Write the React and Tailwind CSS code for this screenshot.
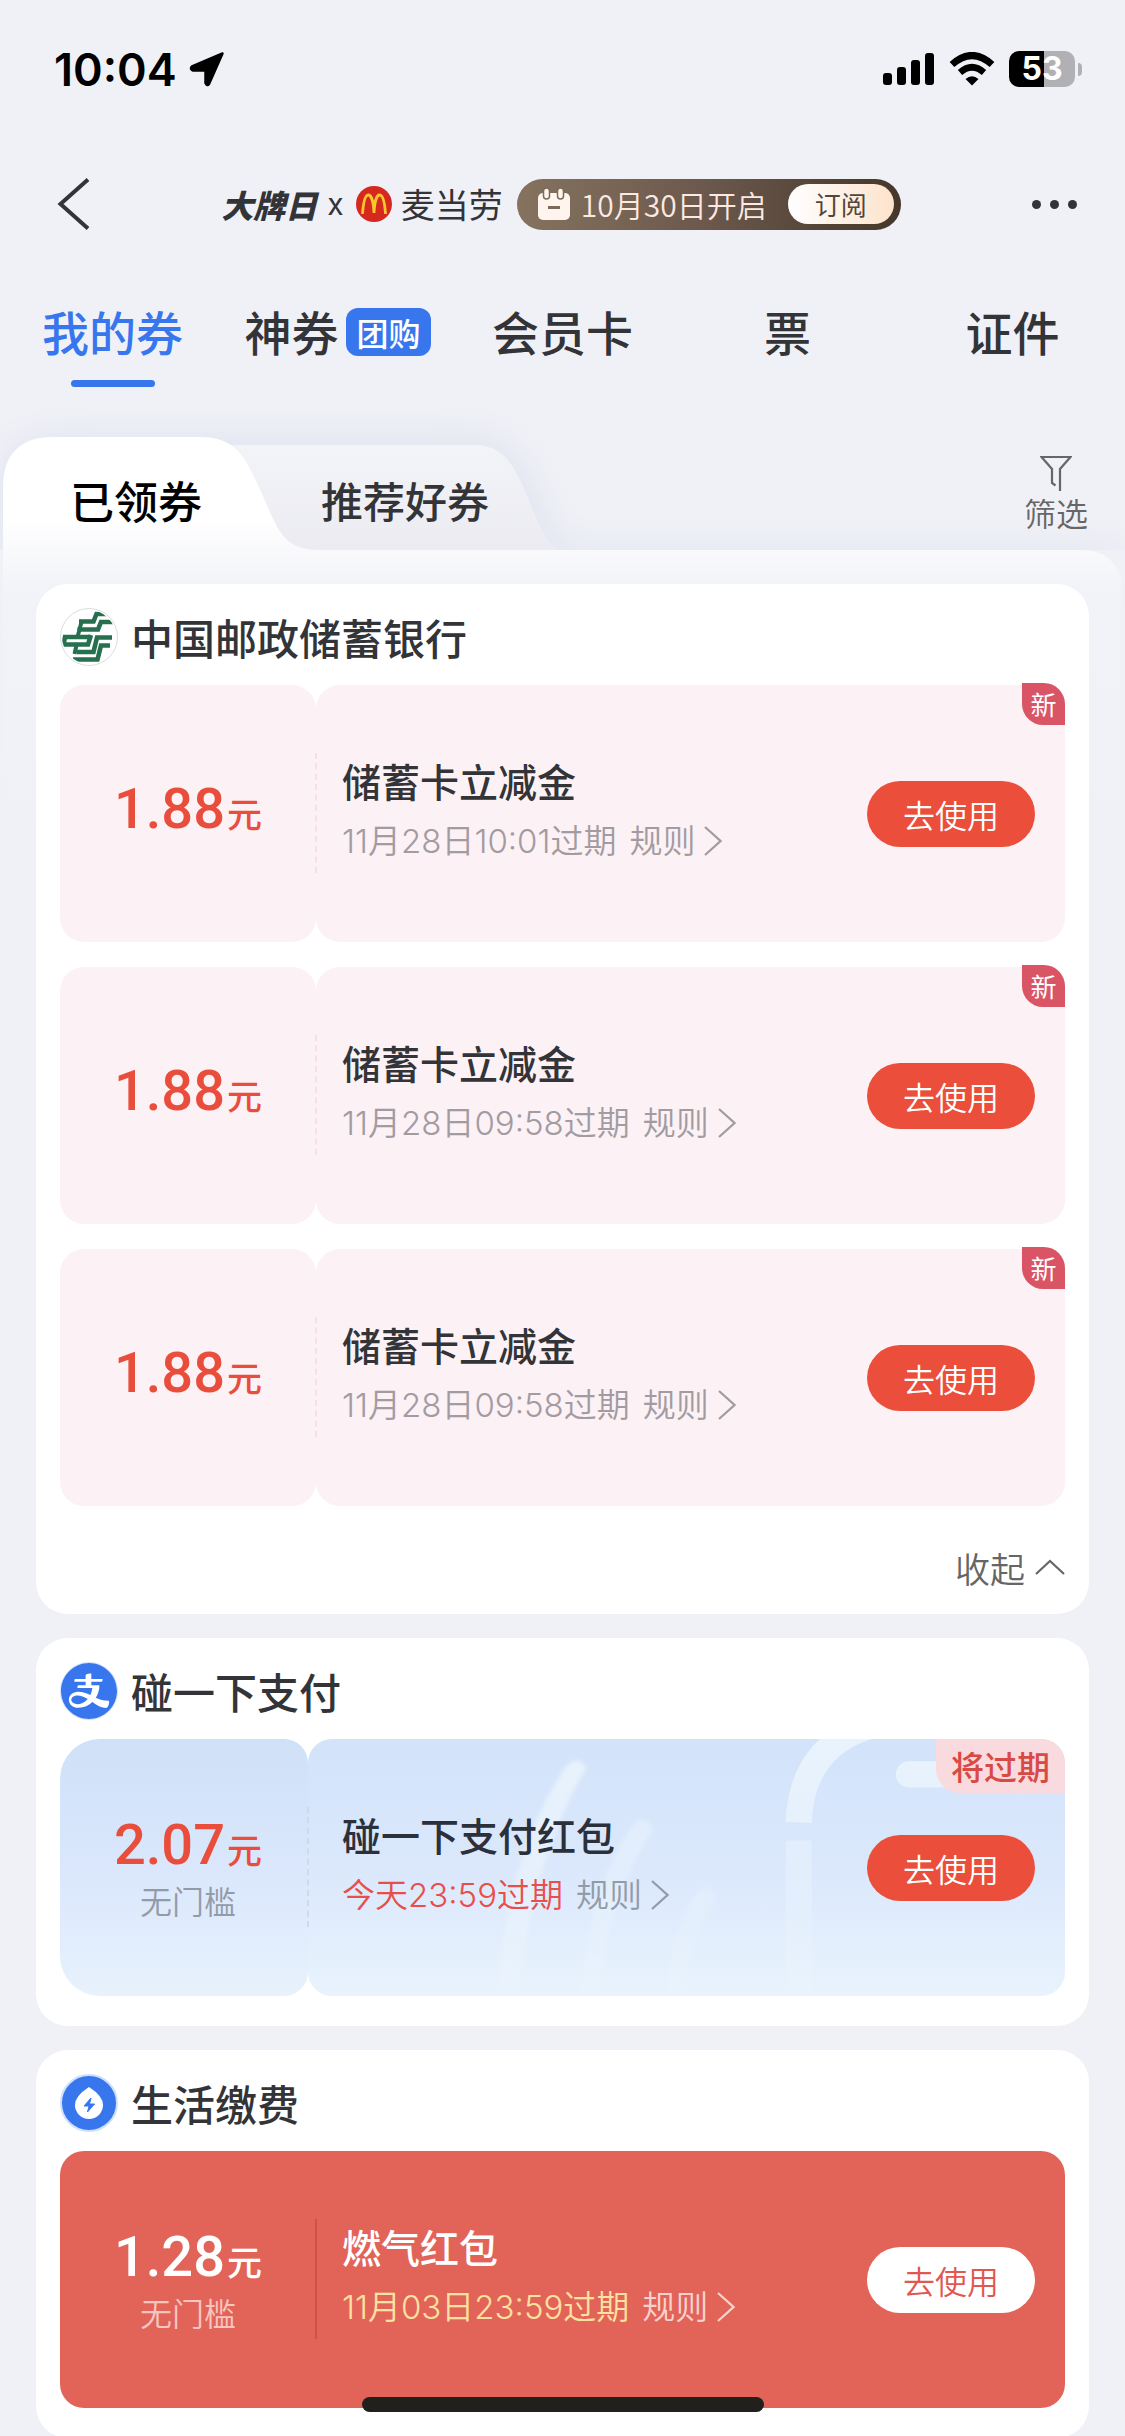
import { AiFillAlipayCircle } from "react-icons/ai";

const TABS = [
  { label: "我的券", active: true },
  { label: "神券", badge: "团购" },
  { label: "会员卡" },
  { label: "票" },
  { label: "证件" },
];

function StatusBar() {
  return (
    <div className="flex h-[138px] shrink-0 items-center justify-between pl-[54px] pr-[43px]">
      <div className="flex items-center gap-3">
        <span className="font-['Inter'] text-[45px] font-semibold leading-none text-black">10:04</span>
        <svg viewBox="0 0 36 36" className="size-9" aria-hidden="true">
          <path d="M33.5 2.5 20 33Q18 35.500 16.500 32V19.500H4Q.500 18 3 15.500Z" fill="#000" stroke="#000" strokeWidth="2.500" strokeLinejoin="round" />
        </svg>
      </div>
      <div className="flex items-center gap-[14px]">
        <svg viewBox="0 0 52 34" className="h-[34px] w-[52px]" aria-hidden="true">
          <rect x="0" y="21" width="9" height="12" rx="3" />
          <rect x="14" y="15" width="9" height="18" rx="3" />
          <rect x="28" y="8" width="9" height="25" rx="3" />
          <rect x="42" y="1" width="9" height="32" rx="3" />
        </svg>
        <svg viewBox="0 0 46 34" className="h-[34px] w-[46px]" aria-hidden="true">
          <path d="M3 12.500Q23-5.500 43 12.500" fill="none" stroke="#000" strokeWidth="7" />
          <path d="M11 20.500Q23 10 35 20.500" fill="none" stroke="#000" strokeWidth="6.500" />
          <path d="M16.500 27Q23 21.500 29.500 27L23 33.500Z" />
        </svg>
        <div className="flex items-center gap-[3px]">
          <div className="flex h-9 w-[66px] items-center justify-center rounded-[10px] bg-gradient-to-r from-black from-53% to-[#b1b1b5] to-53%">
            <span className="font-['Inter'] text-[32px] font-bold leading-none text-white">53</span>
          </div>
          <div className="h-[13px] w-1 rounded-r-full bg-[#b1b1b5]" />
        </div>
      </div>
    </div>
  );
}

function NavBar() {
  return (
    <header className="flex h-[132px] shrink-0 items-center justify-between pl-[56px] pr-[48px]">
      <button type="button" aria-label="返回">
        <svg viewBox="0 0 34 52" className="h-[52px] w-[34px]" fill="none" stroke="#333438" strokeWidth="4" aria-hidden="true">
          <path d="M32 1.500 4.500 26 32 50.500" />
        </svg>
      </button>
      <div className="flex items-center text-[34px] leading-none text-[#333438]">
        <span className="text-[32px] font-black italic">大牌日</span>
        <span className="ml-[10px] font-['Inter'] text-[30px]">x</span>
        <svg viewBox="0 0 36 36" className="ml-3 size-9" aria-hidden="true">
          <circle cx="18" cy="18" r="18" fill="#d5281e" />
          <path d="M6.500 28C7.500 13 10 9 12.500 9S17.500 15 18 27C18.500 15 21 9 23.500 9S28.500 13 29.500 28" fill="none" stroke="#fcc62d" strokeWidth="2.800" />
        </svg>
        <span className="ml-[9px]">麦当劳</span>
        <div className="ml-[14px] flex h-[51px] items-center rounded-full bg-gradient-to-r from-[#85735f] via-[#6b584c] to-[#45372b] pl-5 pr-[7px] text-[#fbe9e2]">
          <svg viewBox="0 0 34 34" className="size-[34px]" aria-hidden="true">
            <rect x="1" y="6" width="32" height="27" rx="5" fill="#fff5ee" />
            <rect x="6.500" y="1" width="6" height="11" rx="3" fill="#fff5ee" stroke="#7b6a59" strokeWidth="1.500" />
            <rect x="20.500" y="1" width="6" height="11" rx="3" fill="#fff5ee" stroke="#7b6a59" strokeWidth="1.500" />
            <rect x="11" y="19" width="12" height="3" fill="#7b6a59" />
          </svg>
          <span className="ml-[10px] text-[30px] font-[350]">10月30日开启</span>
          <button type="button" className="ml-[21px] h-10 rounded-full bg-gradient-to-r from-white to-[#fde3cc] px-[27px] text-[26px] leading-none text-[#55453c]">
            订阅
          </button>
        </div>
      </div>
      <button type="button" aria-label="更多" className="flex gap-[9px]">
        <span className="size-[9px] rounded-full bg-[#333438]" />
        <span className="size-[9px] rounded-full bg-[#333438]" />
        <span className="size-[9px] rounded-full bg-[#333438]" />
      </button>
    </header>
  );
}

function MainTabs() {
  return (
    <nav className="grid h-[167px] shrink-0 grid-cols-5 pt-8">
      {TABS.map((tab) => (
        <a
          key={tab.label}
          href="#"
          aria-current={tab.active ? "page" : undefined}
          className={
            tab.active
              ? "flex flex-col items-center text-[47px] font-medium text-[#3876ee]"
              : "flex flex-col items-center text-[47px] font-medium text-[#333438]"
          }
        >
          <span className="flex h-14 items-center gap-2 whitespace-nowrap leading-none">
            {tab.label}
            {tab.badge && (
              <span className="mt-1 flex h-12 items-center rounded-xl bg-[#3876ee] px-[10px] text-[32px] text-white">{tab.badge}</span>
            )}
          </span>
          {tab.active && <span className="mt-[22px] h-[7px] w-[84px] rounded-full bg-[#3876ee]" />}
        </a>
      ))}
    </nav>
  );
}

function SubTabs() {
  return (
    <div className="relative flex h-[147px] shrink-0 items-start justify-between">
      <svg viewBox="0 0 1125 400" className="absolute left-0 top-0 h-[400px] w-[1125px] overflow-visible" aria-hidden="true">
        <defs>
          <linearGradient id="panel" x1="0" y1="0" x2="0" y2="400" gradientUnits="userSpaceOnUse">
            <stop offset="0" stopColor="#fff" />
            <stop offset=".2" stopColor="#fff" />
            <stop offset=".38" stopColor="#f2f3f8" />
            <stop offset="1" stopColor="#f0f1f6" />
          </linearGradient>
          <linearGradient id="second" x1="0" y1="0" x2="0" y2="1">
            <stop offset="0" stopColor="#f3f4f8" />
            <stop offset="1" stopColor="#ebebf1" />
          </linearGradient>
          <filter id="soft" x="-20%" y="-40%" width="140%" height="180%">
            <feGaussianBlur stdDeviation="17" />
          </filter>
          <clipPath id="above">
            <path d="M0-80H1125V113H0Z" />
          </clipPath>
        </defs>
        <g clipPath="url(#above)">
          <path d="M0 113V30Q10 0 60-2H470C530 0 532 60 562 110H1125V130H0Z" fill="#e1e4f1" filter="url(#soft)" />
          <path d="M200 113V8H475C506 8 516 32 530 66S548 104 558 113Z" fill="url(#second)" />
        </g>
        <path d="M3 400V50C3 18 20 0 52 0H200C238 0 246 22 262 57S282 113 320 113H1085Q1112 115 1121 140V400Z" fill="url(#panel)" />
      </svg>
      <div className="relative flex" role="tablist">
        <button type="button" role="tab" aria-selected="true" className="h-[126px] px-[70px] text-[44px] font-medium leading-none text-black">
          已领券
        </button>
        <button type="button" role="tab" aria-selected="false" className="ml-[49px] h-[126px] text-[42px] font-medium leading-none text-[#333438]">
          推荐好券
        </button>
      </div>
      <button type="button" className="relative mr-[37px] mt-[18px] flex flex-col items-center gap-0.5 text-[32px] leading-[38px] text-[#666]">
        <svg viewBox="0 0 32 36" className="h-9 w-8" fill="none" stroke="#666" strokeWidth="2.200" aria-hidden="true">
          <path d="M20 36V14L30.500 2H1.500L12 14V28L15.500 30.500" />
        </svg>
        <span className="font-[350]">筛选</span>
      </button>
    </div>
  );
}

function BankLogo() {
  return (
    <svg viewBox="0 0 58 58" className="size-[58px]" aria-hidden="true">
      <defs>
        <clipPath id="bank-disc">
          <circle cx="29" cy="29" r="27" />
        </clipPath>
      </defs>
      <circle cx="29" cy="29" r="28.500" fill="#fff" stroke="#d9dfdc" />
      <g fill="none" stroke="#26704f" strokeWidth="4.600" clipPath="url(#bank-disc)">
        <path d="M19 13.500H33.500L36.500 6H50" />
        <path d="M56 14H41L38 21.500H17.500" />
        <path d="M22 12 17.500 29M17 35 14.500 46" strokeWidth="4" />
        <path d="M30 29H5L3.500 36.500H28L31 27" />
        <path d="M52 29.500H37L33.500 44H17" />
        <path d="M50 37.500H41L37.500 51.500H13" />
      </g>
    </svg>
  );
}

function AlipayLogo() {
  return (
    <span className="flex size-[58px] items-center justify-center rounded-full border border-[#cfe0fb] bg-white">
      <AiFillAlipayCircle className="size-16 shrink-0 text-[#3876ee]" />
    </span>
  );
}

function UtilityLogo() {
  return (
    <svg viewBox="0 0 58 58" className="size-[58px]" aria-hidden="true">
      <circle cx="29" cy="29" r="28" fill="#3876ee" stroke="#cfe0fb" strokeWidth="2" />
      <path d="M29 13Q43 22 43 31A14 14 0 0 1 15 31Q15 22 29 13Z" fill="#fff" />
      <path d="M31 24 24 32H29L27.500 38 34.500 30H29.500Z" fill="#3876ee" stroke="#3876ee" strokeLinejoin="round" />
    </svg>
  );
}

function Card({ logo, title, children }) {
  return (
    <section className="rounded-[32px] bg-white px-6 pb-[30px]">
      <h2 className="flex h-[101px] items-center gap-[13px] pt-1 text-[42px] font-medium leading-none text-[#333438]">
        {logo}
        {title}
      </h2>
      {children}
    </section>
  );
}

const THEMES = {
  pink: {
    shell: "",
    left: "w-64 rounded-3xl bg-[#fcf1f5] pb-[6px]",
    right: "rounded-3xl bg-[#fcf1f5] pl-[26px]",
    rule: "border-l-2 border-dashed border-[#f8dfe6]",
    amount: "text-[#e94e3c]",
    limit: "text-[#999]",
    title: "text-[#333438]",
    date: "text-[#a29ba1]",
    link: "text-[#a29ba1]",
    button: "bg-[#eb4e3b] text-white",
  },
  blue: {
    shell: "",
    left: "w-[248px] rounded-l-[40px] rounded-r-3xl bg-gradient-to-b from-[#cfe1f8] via-[#dae7fc] to-[#e8f2fc] pl-2",
    right: "rounded-3xl bg-gradient-to-b from-[#d2e3fa] via-[#dbe8fc] to-[#e8f3fd] pl-[34px]",
    rule: "border-l-2 border-dashed border-[#cdd9ef]",
    amount: "text-[#e94e3c]",
    limit: "text-[#929ba8]",
    title: "text-[#2b303b]",
    date: "text-[#e94e4a]",
    link: "text-[#929ba8]",
    button: "bg-[#eb4e3b] text-white",
  },
  red: {
    shell: "rounded-3xl bg-[#e26459]",
    left: "w-64",
    right: "pl-[26px]",
    rule: "border-l-2 border-[#cf5048]",
    amount: "text-white",
    limit: "text-[#f6c5c0]",
    title: "text-white",
    date: "text-[#fbe2a0]",
    link: "text-[#f8d3cd]",
    button: "bg-white text-[#e2574f]",
  },
};

function BlueDecoration() {
  return (
    <svg viewBox="0 0 756 258" preserveAspectRatio="xMaxYMid slice" className="absolute inset-0 size-full rounded-3xl" aria-hidden="true">
      <defs>
        <linearGradient id="streak" x1="0" y1="0" x2="0" y2="258" gradientUnits="userSpaceOnUse">
          <stop offset="0" stopColor="#e9f3fd" />
          <stop offset=".5" stopColor="#e9f3fd" stopOpacity=".75" />
          <stop offset="1" stopColor="#eef5fd" stopOpacity=".4" />
        </linearGradient>
        <filter id="streak-soft" x="-5%" y="-5%" width="110%" height="110%">
          <feGaussianBlur stdDeviation="2" />
        </filter>
      </defs>
      <g fill="url(#streak)" filter="url(#streak-soft)">
        <path d="M258 28Q270 16 278 30Q228 110 208 262H188Q200 110 258 28Z" />
        <path d="M326 84Q340 76 345 92Q298 160 290 262H272Q280 150 326 84Z" opacity=".7" />
        <path d="M390 152Q402 146 408 158Q380 200 376 262H358Q362 190 390 152Z" opacity=".6" />
      </g>
      <g fill="none" stroke="url(#streak)">
        <path d="M490 84C492 30 520 0 560-12" strokeWidth="26" />
        <path d="M490 102V262" strokeWidth="26" opacity=".7" />
        <path d="M600 36H700" strokeWidth="26" strokeLinecap="round" />
      </g>
    </svg>
  );
}

function Coupon({ theme, amount, limit, title, date, isNew, expiring }) {
  const t = THEMES[theme];
  return (
    <article className={`relative flex h-[257px] ${t.shell}`}>
      <div className={`flex shrink-0 flex-col items-center justify-center ${t.left} ${t.amount}`}>
        <p className="flex items-baseline gap-0.5 font-medium">
          <span className="font-['Roboto'] text-[56px] leading-[60px]">{amount}</span>
          <span className="text-[35px] leading-[60px]">元</span>
        </p>
        {limit && <p className={`text-[32px] font-[350] leading-[42px] ${t.limit}`}>{limit}</p>}
      </div>
      <div className={`relative flex min-w-0 flex-1 items-center justify-between pr-[30px] ${t.right}`}>
        {theme === "blue" && <BlueDecoration />}
        <span className={`absolute -left-px inset-y-[52px] mt-4 h-[120px] ${t.rule}`} />
        <div className="relative pb-[6px]">
          <h3 className={`text-[39px] font-medium leading-[60px] ${t.title}`}>{title}</h3>
          <p className={`flex items-center font-['Inter','Noto_Sans_CJK_SC',sans-serif] text-[33px] font-[350] leading-[62px] ${t.date}`}>
            {date}
            <a href="#" className={`ml-[13px] flex items-center gap-[9px] ${t.link}`}>
              规则
              <svg viewBox="0 0 18 30" className="h-[30px] w-[18px]" fill="none" stroke="currentColor" strokeWidth="2.200" aria-hidden="true">
                <path d="M1 1 16.500 15 1 29" />
              </svg>
            </a>
          </p>
        </div>
        <button type="button" className={`relative h-[66px] w-[168px] rounded-full text-[32px] font-[350] leading-none ${t.button}`}>
          去使用
        </button>
      </div>
      {isNew && (
        <span className="absolute -top-0.5 right-0 flex h-[42px] w-[43px] items-center justify-center rounded-bl-[21px] rounded-tr-[21px] bg-[#d95566] text-[26px] leading-none text-white">
          新
        </span>
      )}
      {expiring && (
        <span className="absolute right-0 top-0 flex h-[54px] items-center rounded-bl-3xl rounded-tr-3xl bg-[#f9dade] px-[15px] text-[33px] font-medium leading-none text-[#d84a45]">
          将过期
        </span>
      )}
    </article>
  );
}

export default function App() {
  return (
    <div className="relative flex h-screen flex-col overflow-hidden bg-[#f0f1f6] font-['Noto_Sans_CJK_SC',sans-serif]">
      <StatusBar />
      <NavBar />
      <MainTabs />
      <SubTabs />
      <main className="relative flex flex-col gap-6 px-9">
        <Card logo={<BankLogo />} title="中国邮政储蓄银行">
          <div className="flex flex-col gap-[25px]">
            <Coupon theme="pink" amount="1.88" title="储蓄卡立减金" date="11月28日10:01过期" isNew />
            <Coupon theme="pink" amount="1.88" title="储蓄卡立减金" date="11月28日09:58过期" isNew />
            <Coupon theme="pink" amount="1.88" title="储蓄卡立减金" date="11月28日09:58过期" isNew />
          </div>
          <button type="button" className="ml-auto mt-11 flex h-[34px] items-center gap-[10px] text-[35px] font-[350] leading-none text-[#666]">
            收起
            <svg viewBox="0 0 30 16" className="h-4 w-[30px]" fill="none" stroke="currentColor" strokeWidth="2.200" aria-hidden="true">
              <path d="M1 15 15 2 29 15" />
            </svg>
          </button>
        </Card>
        <Card logo={<AlipayLogo />} title="碰一下支付">
          <Coupon theme="blue" amount="2.07" limit="无门槛" title="碰一下支付红包" date="今天23:59过期" expiring />
        </Card>
        <Card logo={<UtilityLogo />} title="生活缴费">
          <Coupon theme="red" amount="1.28" limit="无门槛" title="燃气红包" date="11月03日23:59过期" />
        </Card>
      </main>
      <div className="absolute inset-x-0 bottom-6 mx-auto h-[15px] w-[402px] rounded-full bg-[#22201d]" />
    </div>
  );
}
